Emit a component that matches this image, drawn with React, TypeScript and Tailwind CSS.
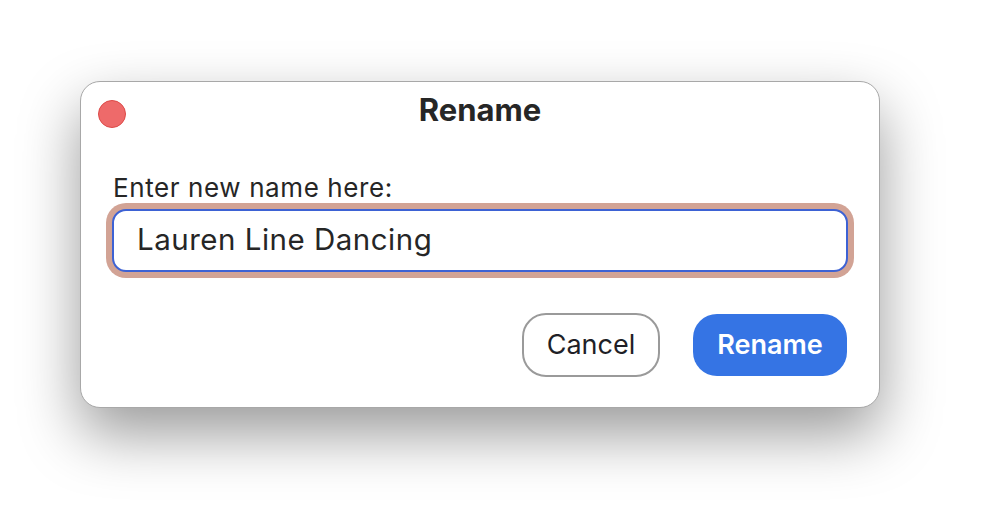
export default function App() {
  return (
    <div className="w-[982px] h-[514px] bg-white overflow-hidden" style={{ fontFamily: 'Inter, "Noto Sans", sans-serif' }}>
      <div className="pt-[81px] pl-[80px]">
        {/* dialog */}
        <div className="w-[800px] h-[327px] bg-white rounded-[20px] border border-[#a8a8a8] shadow-[0_26px_60px_rgba(0,0,0,0.4)]">
          {/* title bar */}
          <div className="flex items-start h-[56px] pl-[17px] pr-[17px]">
            <div className="mt-[18px] w-[28px] h-[28px] rounded-full bg-[#ee6a6a] border border-[#dd4a48]" />
            <div className="flex-1 text-center text-[31px] leading-[36px] mt-[10px] font-bold text-[#262626] -ml-[28px]">Rename</div>
          </div>

          {/* body */}
          <div className="pl-[25px] pr-[25px] pt-[35px]">
            <div className="pl-[7px] text-[26px] leading-[30px] tracking-[0.6px] text-[#262626]">Enter new name here:</div>
            <div className="rounded-[20px] bg-[#d2a395] p-[6px]">
              <div className="h-[63px] rounded-[14px] bg-white border-2 border-[#3d62d4] flex items-center pl-[23px] pb-[2px] text-[29.5px] tracking-[0.5px] text-[#262626]">
                Lauren Line Dancing
              </div>
            </div>

            {/* buttons */}
            <div className="flex justify-end items-center gap-[33px] mt-[35px] pr-[7px]">
              <button className="w-[138px] h-[64px] rounded-[24px] border-2 border-[#9a9a9a] bg-white text-[27px] text-[#1f1f27]">
                Cancel
              </button>
              <button className="w-[154px] h-[62px] rounded-[24px] bg-[#3574e4] text-[27px] font-semibold text-white">
                Rename
              </button>
            </div>
          </div>
        </div>
      </div>
    </div>
  )
}
